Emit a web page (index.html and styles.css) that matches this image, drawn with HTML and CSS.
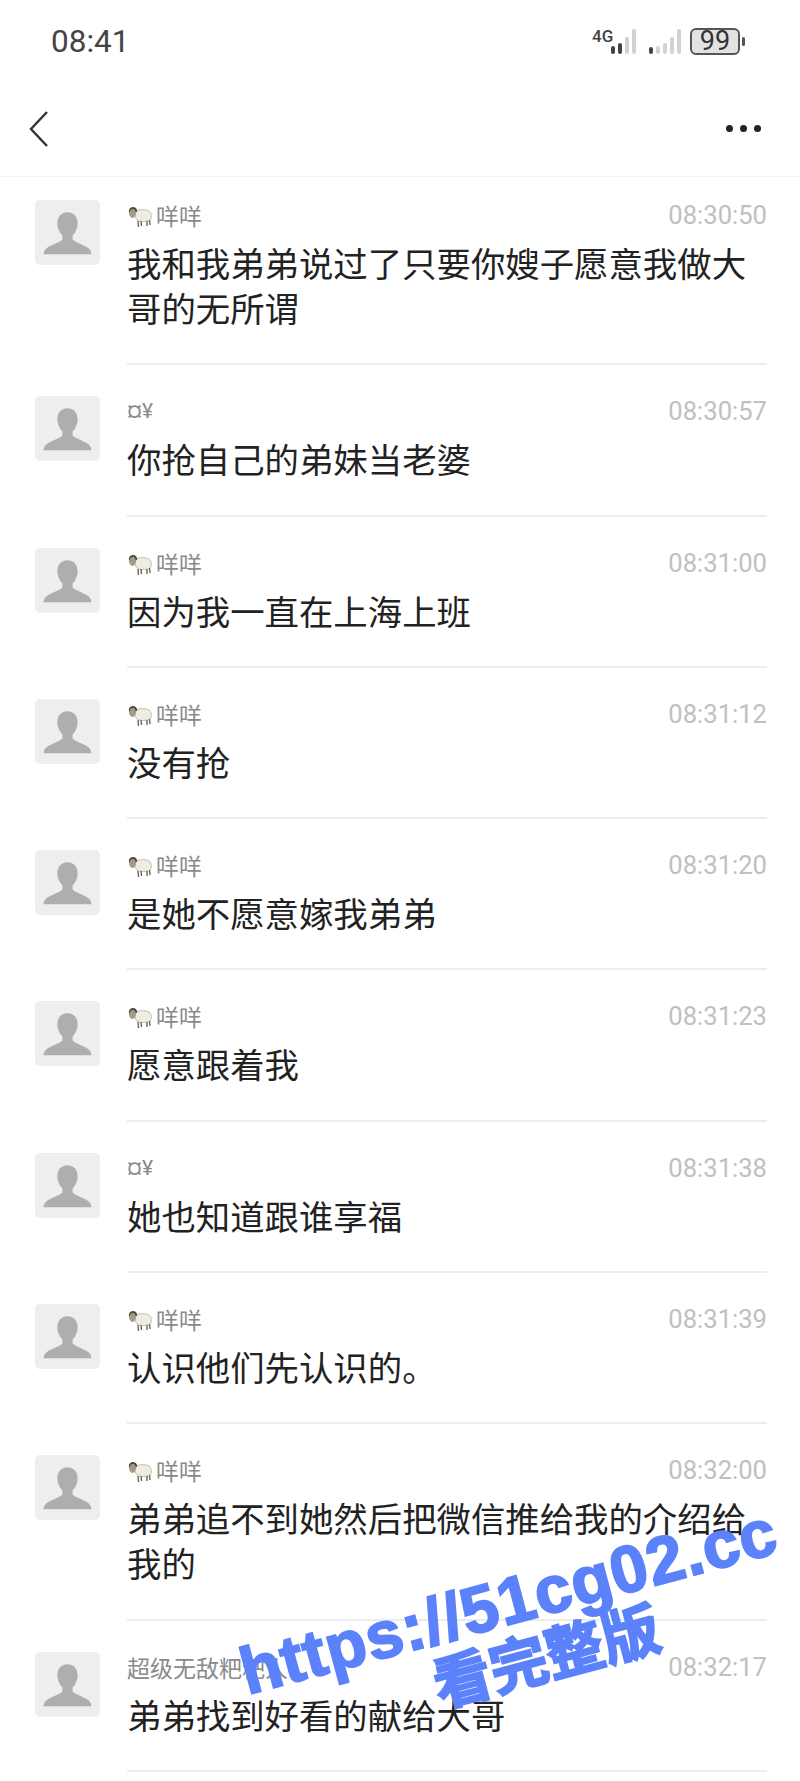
FILE: index.html
```html
<!DOCTYPE html>
<html lang="en">
<head>
    <meta charset="UTF-8">
    <meta name="viewport" content="width=device-width, initial-scale=1.0">
    <title>聊天记录</title>
    <link rel="stylesheet" href="styles.css">
</head>
<body>

<svg class="defs" width="0" height="0">
    <symbol id="avatar" viewBox="0 0 64 64">
        <rect width="64" height="64" rx="5" fill="#eeeeee"/>
        <path d="M32 12c-6.500 0-10 5-10 11 0 5 2 9 5 12v4c-3 3-10 5-15 8-3 2-3.500 5-3.500 6.500h47c0-1.500-.5-4.500-3.500-6.500-5-3-12-5-15-8v-4c3-3 5-7 5-12 0-6-3.500-11-10-11z" fill="#aeaeae"/>
    </symbol>
    <symbol id="sheep" viewBox="0 0 26 26">
        <path d="M8 9c3-3 10-3 14-1 3 2 3 7 1 9-3 2-10 2-13 0-2-2-3-6-2-8z" fill="#eeede2" stroke="#b5b1a2" stroke-width=".8"/>
        <path d="M11 18l.5 6M14 18l.5 5M20 18v5M22.500 17l.5 5" stroke="#6e6656" stroke-width="1.400" fill="none"/>
        <path d="M2 8c.5-3 6-3 7 0 .5 3-1 7-3.500 7S1.500 11 2 8z" fill="#a59a86"/>
        <path d="M2 7c1-4 7-4 8 0 .5 2-1 3-1.500 1.500C8 6.500 7 6 5.500 6 4 6 3 7 3 8.500 3 10 1.500 9 2 7z" fill="#4d4538"/>
    </symbol>
    <symbol id="back" viewBox="0 0 24 40">
        <path d="M20 3L4 20l16 17" fill="none" stroke="#333" stroke-width="2.400"/>
    </symbol>
</svg>

<div class="status-bar">
    <span class="clock">08:41</span>
    <div class="status-icons">
        <div class="signal sim-one">
            <span class="net">4G</span>
            <i class="bar b1 on"></i><i class="bar b2 on"></i><i class="bar b3"></i><i class="bar b4"></i>
        </div>
        <div class="signal sim-two">
            <i class="bar b0 on"></i><i class="bar b1"></i><i class="bar b2"></i><i class="bar b3"></i><i class="bar b4"></i>
        </div>
        <div class="battery"><span>99</span></div>
        <i class="battery-tip"></i>
    </div>
</div>

<div class="nav-bar">
    <svg class="back-icon"><use href="#back"/></svg>
    <div class="more"><i></i><i></i><i></i></div>
</div>

<div class="list">
    <div class="row">
        <svg class="avatar"><use href="#avatar"/></svg>
        <div class="row-body">
            <div class="row-head">
                <span class="name"><svg class="sheep"><use href="#sheep"/></svg>咩咩</span>
                <span class="time">08:30:50</span>
            </div>
            <p class="msg">我和我弟弟说过了只要你嫂子愿意我做大哥的无所谓</p>
        </div>
    </div>
    <div class="row">
        <svg class="avatar"><use href="#avatar"/></svg>
        <div class="row-body">
            <div class="row-head">
                <span class="name name-small">¤¥</span>
                <span class="time">08:30:57</span>
            </div>
            <p class="msg">你抢自己的弟妹当老婆</p>
        </div>
    </div>
    <div class="row">
        <svg class="avatar"><use href="#avatar"/></svg>
        <div class="row-body">
            <div class="row-head">
                <span class="name"><svg class="sheep"><use href="#sheep"/></svg>咩咩</span>
                <span class="time">08:31:00</span>
            </div>
            <p class="msg">因为我一直在上海上班</p>
        </div>
    </div>
    <div class="row">
        <svg class="avatar"><use href="#avatar"/></svg>
        <div class="row-body">
            <div class="row-head">
                <span class="name"><svg class="sheep"><use href="#sheep"/></svg>咩咩</span>
                <span class="time">08:31:12</span>
            </div>
            <p class="msg">没有抢</p>
        </div>
    </div>
    <div class="row">
        <svg class="avatar"><use href="#avatar"/></svg>
        <div class="row-body">
            <div class="row-head">
                <span class="name"><svg class="sheep"><use href="#sheep"/></svg>咩咩</span>
                <span class="time">08:31:20</span>
            </div>
            <p class="msg">是她不愿意嫁我弟弟</p>
        </div>
    </div>
    <div class="row">
        <svg class="avatar"><use href="#avatar"/></svg>
        <div class="row-body">
            <div class="row-head">
                <span class="name"><svg class="sheep"><use href="#sheep"/></svg>咩咩</span>
                <span class="time">08:31:23</span>
            </div>
            <p class="msg">愿意跟着我</p>
        </div>
    </div>
    <div class="row">
        <svg class="avatar"><use href="#avatar"/></svg>
        <div class="row-body">
            <div class="row-head">
                <span class="name name-small">¤¥</span>
                <span class="time">08:31:38</span>
            </div>
            <p class="msg">她也知道跟谁享福</p>
        </div>
    </div>
    <div class="row">
        <svg class="avatar"><use href="#avatar"/></svg>
        <div class="row-body">
            <div class="row-head">
                <span class="name"><svg class="sheep"><use href="#sheep"/></svg>咩咩</span>
                <span class="time">08:31:39</span>
            </div>
            <p class="msg">认识他们先认识的。</p>
        </div>
    </div>
    <div class="row">
        <svg class="avatar"><use href="#avatar"/></svg>
        <div class="row-body">
            <div class="row-head">
                <span class="name"><svg class="sheep"><use href="#sheep"/></svg>咩咩</span>
                <span class="time">08:32:00</span>
            </div>
            <p class="msg">弟弟追不到她然后把微信推给我的介绍给我的</p>
        </div>
    </div>
    <div class="row">
        <svg class="avatar"><use href="#avatar"/></svg>
        <div class="row-body">
            <div class="row-head">
                <span class="name">超级无敌粑粑人</span>
                <span class="time">08:32:17</span>
            </div>
            <p class="msg">弟弟找到好看的献给大哥</p>
        </div>
    </div>
</div>

<div class="watermark">
    <div class="wm-url">https://51cg02.cc</div>
    <div class="wm-sub">看完整版</div>
</div>

</body>
</html>
```

FILE: styles.css
```css
* {
    box-sizing: border-box;
}
html, body {
    margin: 0;
    padding: 0;
}
body {
    width: 800px;
    height: 1781px;
    overflow: hidden;
    position: relative;
    background-color: #fff;
    font-family: Roboto, "Noto Sans CJK SC", sans-serif;
}
.defs {
    position: absolute;
}

/* status bar */
.status-bar {
    height: 84px;
    padding: 24px 0 0 51px;
    display: flex;
    justify-content: space-between;
    align-items: flex-start;
}
.clock {
    font-size: 31.5px;
    line-height: 36px;
    color: #444;
}
.status-icons {
    display: flex;
    align-items: flex-end;
    margin: 3px 55px 0 0;
    height: 28px;
}
.signal {
    display: flex;
    align-items: flex-end;
    gap: 3px;
    position: relative;
    height: 26px;
}
.sim-one {
    width: 44px;
    justify-content: flex-end;
    margin-right: 13px;
    padding-bottom: 1px;
}
.sim-two {
    margin-right: 9px;
    padding-bottom: 1px;
}
.net {
    position: absolute;
    left: 0;
    top: -1px;
    font-size: 17px;
    line-height: 17px;
    font-weight: 500;
    color: #444;
}
.bar {
    display: block;
    width: 4px;
    background-color: #d2d2d2;
    border-radius: 2px;
}
.bar.on {
    background-color: #444;
}
.b0 { height: 7px; }
.b1 { height: 8px; }
.b2 { height: 11px; }
.b3 { height: 17px; }
.b4 { height: 25px; }
.battery {
    width: 50px;
    height: 27px;
    border: 2px solid #555;
    border-radius: 6px;
    background-color: #e2e2e2;
    display: flex;
    align-items: center;
    justify-content: center;
    font-size: 27px;
    line-height: 1;
    color: #333;
}
.battery-tip {
    width: 3px;
    height: 9px;
    margin: 0 0 9px 2px;
    background-color: #555;
    border-radius: 2px;
}

/* nav */
.nav-bar {
    height: 93px;
    padding: 25px 39px 0 27px;
    border-bottom: 1px solid #f3f3f3;
    display: flex;
    justify-content: space-between;
    align-items: flex-start;
}
.back-icon {
    width: 24px;
    height: 40px;
}
.more {
    display: flex;
    gap: 7px;
    margin-top: 16px;
}
.more i {
    width: 7px;
    height: 7px;
    border-radius: 50%;
    background-color: #222;
}

/* message rows */
.list {
    padding: 0 0 0 35px;
    margin-top: -8px;
}
.row {
    display: flex;
    gap: 27px;
    padding-top: 31px;
}
.avatar {
    width: 65px;
    height: 65px;
    flex-shrink: 0;
}
.row-body {
    width: 640px;
    padding-bottom: 33.3px;
    border-bottom: 2px solid #ececec;
}
.row-head {
    display: flex;
    justify-content: space-between;
    align-items: center;
    height: 30px;
}
.name {
    display: flex;
    align-items: center;
    font-size: 23px;
    color: #8a8a8a;
}
.name-small {
    font-size: 21px;
}
.sheep {
    width: 26px;
    height: 26px;
    margin: 2px 3px 0 0;
}
.time {
    font-size: 25.6px;
    color: #c0c0c0;
}
.msg {
    margin: 10px 0 0;
    font-size: 34.4px;
    line-height: 45px;
    color: #222;
    font-family: "Noto Sans CJK SC", sans-serif;
}

/* watermark over the list */
.watermark {
    position: absolute;
    left: 224px;
    top: 1641px;
    width: 570px;
    transform: rotate(-15deg);
    transform-origin: left top;
    color: #5b82fa;
    font-family: "Liberation Sans", "Noto Sans CJK SC", sans-serif;
    font-weight: 700;
}
.wm-url {
    font-size: 66px;
    line-height: 70px;
    letter-spacing: 1px;
    -webkit-text-stroke: 2px #5b82fa;
    white-space: nowrap;
    text-align: center;
}
.wm-sub {
    font-size: 58px;
    line-height: 60px;
    margin-left: 45px;
    text-align: center;
    -webkit-text-stroke: 2px #5b82fa;
}
```
